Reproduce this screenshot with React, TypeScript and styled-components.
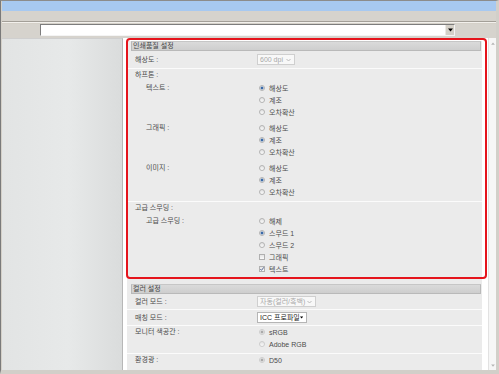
import React from "react";
import styled, { createGlobalStyle } from "styled-components";

const GlobalStyle = createGlobalStyle`
  html, body {
    margin: 0;
    padding: 0;
    background: #ffffff;
  }
  body {
    font-family: "Liberation Sans", "Noto Sans CJK KR", sans-serif;
    font-size: 7px;
    color: #4c4c4c;
  }
`;

const Window = styled.div`
  position: relative;
  width: 499px;
  height: 374px;
  box-sizing: border-box;
  border-top: 1px solid #8c8c8c;
  border-left: 1px solid #7a7a7a;
  border-right: 3px solid #d2cfc9;
  border-bottom: 4px solid #d2cfc9;
  padding-left: 1px;
  background: #d4d0c8;
  display: flex;
  flex-direction: column;
  overflow: hidden;
`;

const TitleBar = styled.div`
  height: 10px;
  background: #a7c9f1;
`;

const ToolBar = styled.div`
  height: 10px;
  background: #d6d3cd;
  border-bottom: 1px solid #a39f98;
  box-shadow: 0 1px 0 #f2f0ec;
`;

const AddressRow = styled.div`
  height: 14px;
  margin-top: 2px;
  padding-left: 38px;
  box-sizing: border-box;
  background: #d6d3cd;
`;

const AddressBox = styled.div`
  width: 415px;
  height: 12px;
  box-sizing: border-box;
  border: 1px solid;
  border-color: #7d7d7d #f4f4f4 #f4f4f4 #7d7d7d;
  background: #ffffff;
  display: flex;
  justify-content: flex-end;
`;

const AddressButton = styled.div`
  width: 8px;
  height: 100%;
  background: #d4d0c8;
  border-left: 1px solid #ece9e4;
  display: flex;
  align-items: center;
  justify-content: center;
`;

const Body = styled.div`
  flex: 1;
  display: flex;
  min-height: 0;
`;

const SidePanel = styled.div`
  width: 120px;
  border-right: 1px solid #b7b7b7;
  border-top: 1px solid #cfcfcf;
  background: linear-gradient(to right, #e2e4e4, #e7e9e9 55%, #dadcdc);
`;

const Main = styled.div`
  flex: 1;
  background: #ffffff;
  padding: 3px 6px 0 4px;
  display: flex;
`;

const Panel = styled.div`
  flex: 1;
  background: #ebebeb;
`;

const Section = styled.div<{ $gap?: number }>`
  margin-top: ${(p) => p.$gap ?? 0}px;
`;

const SectionHeader = styled.div`
  height: 10px;
  box-sizing: border-box;
  margin: 0 1px 0 4px;
  padding-left: 1px;
  line-height: 8px;
  background: linear-gradient(#dadada, #cecece);
  border: 1px solid #b9b9b9;
  border-top-color: #c6c6c6;
  color: #454545;
`;

const FieldRow = styled.div<{ $h?: number; $top?: boolean; $last?: boolean }>`
  display: grid;
  grid-template-columns: 122px 1fr;
  align-items: ${(p) => (p.$top ? "start" : "center")};
  height: ${(p) => (p.$h ? `${p.$h}px` : "auto")};
  padding: 0 0 ${(p) => (p.$top ? 3 : 0)}px 8px;
  border-bottom: ${(p) => (p.$last ? "none" : "1px solid #fbfbfb")};
`;

const Label = styled.div`
  line-height: 12px;
  white-space: nowrap;
`;

const Group = styled.div<{ $last?: boolean }>`
  padding: 0 0 3px 8px;
  border-bottom: ${(p) => (p.$last ? "none" : "1px solid #fbfbfb")};
`;

const GroupTitle = styled.div`
  height: 12px;
  line-height: 12px;
  margin-bottom: 1px;
`;

const SubRow = styled.div`
  display: grid;
  grid-template-columns: 111px 1fr;
  padding-left: 11px;
  & + & {
    margin-top: 4px;
  }
`;

const Options = styled.div`
  display: flex;
  flex-direction: column;
`;

const Option = styled.div`
  height: 12px;
  display: flex;
  align-items: center;
  gap: 4px;
  padding-left: 2px;
  white-space: nowrap;
`;

const RadioDot = styled.span<{ $checked?: boolean; $disabled?: boolean }>`
  width: 6px;
  height: 6px;
  border-radius: 50%;
  box-sizing: border-box;
  flex: none;
  border: 1px solid ${(p) => (p.$disabled ? "#cdcdcd" : "#b3b3b3")};
  background: ${(p) =>
    p.$checked
      ? `radial-gradient(circle, ${p.$disabled ? "#aaaaaa" : "#3a6aa8"} 0 1.2px, #f2f2f2 1.8px)`
      : "linear-gradient(#e2e2e2, #fbfbfb)"};
`;

const CheckBox = styled.span`
  width: 6px;
  height: 6px;
  box-sizing: border-box;
  flex: none;
  border: 1px solid #b0b0b0;
  background: linear-gradient(#e4e4e4, #fbfbfb);
  position: relative;
  svg {
    position: absolute;
    left: -1px;
    top: -1px;
  }
`;

const Select = styled.div<{ $w: number; $disabled?: boolean }>`
  width: ${(p) => p.$w}px;
  height: 11px;
  box-sizing: border-box;
  border: 1px solid ${(p) => (p.$disabled ? "#cfcfcf" : "#b5b5b5")};
  background: ${(p) => (p.$disabled ? "#f8f8f8" : "#ffffff")};
  color: ${(p) => (p.$disabled ? "#a8a8a8" : "#222222")};
  display: flex;
  align-items: center;
  justify-content: space-between;
  padding: 0 3px 0 2px;
  white-space: nowrap;
  line-height: 9px;
`;

const ScrollBar = styled.div`
  width: 7px;
  background: #f6f6f6;
  border-left: 1px solid #e2e2e2;
  display: flex;
  flex-direction: column;
  justify-content: space-between;
  align-items: center;
  padding: 4px 0 3px;
`;

const Highlight = styled.div`
  position: absolute;
  left: 125px;
  top: 37px;
  width: 361px;
  height: 241px;
  box-sizing: border-box;
  border: 2px solid #e5141c;
  border-radius: 4px;
  pointer-events: none;
`;

function Arrow({ color = "#000", up = false, size = 4 }: { color?: string; up?: boolean; size?: number }) {
  return (
    <svg width={size + 1} height={size} viewBox="0 0 5 4">
      <path d={up ? "M0 3.5 L2.5 0.5 L5 3.5 Z" : "M0 0.5 L5 0.5 L2.5 3.5 Z"} fill={color} />
    </svg>
  );
}

function Chevron() {
  return (
    <svg width="5" height="4" viewBox="0 0 5 4">
      <path d="M0.5 1 L2.5 3 L4.5 1" fill="none" stroke="#b4b4b4" strokeWidth="0.9" />
    </svg>
  );
}

type Opt = { text: string; checked?: boolean; disabled?: boolean; box?: boolean };

function OptionList({ items }: { items: Opt[] }) {
  return (
    <Options>
      {items.map((o) => (
        <Option key={o.text}>
          {o.box ? (
            <CheckBox>
              {o.checked && (
                <svg width="6" height="6" viewBox="0 0 6 6">
                  <path d="M1.3 3 L2.5 4.4 L4.8 1.3" fill="none" stroke="#4a5f8c" strokeWidth="0.9" />
                </svg>
              )}
            </CheckBox>
          ) : (
            <RadioDot $checked={o.checked} $disabled={o.disabled} />
          )}
          <span>{o.text}</span>
        </Option>
      ))}
    </Options>
  );
}

const halftone: { name: string; pick: number }[] = [
  { name: "텍스트 :", pick: 0 },
  { name: "그래픽 :", pick: 1 },
  { name: "이미지 :", pick: 1 },
];

const halftoneModes = ["해상도", "계조", "오차확산"];

export default function App() {
  return (
    <>
      <GlobalStyle />
      <Window>
        <TitleBar />
        <ToolBar />
        <AddressRow>
          <AddressBox>
            <AddressButton>
              <Arrow />
            </AddressButton>
          </AddressBox>
        </AddressRow>
        <Body>
          <SidePanel />
          <Main>
            <Panel>
              <Section>
                <SectionHeader>인쇄품질 설정</SectionHeader>
                <FieldRow $h={17}>
                  <Label>해상도 :</Label>
                  <Select $w={38} $disabled>
                    <span>600 dpi</span>
                    <Chevron />
                  </Select>
                </FieldRow>
                <Group>
                  <GroupTitle>하프톤 :</GroupTitle>
                  {halftone.map((h) => (
                    <SubRow key={h.name}>
                      <Label>{h.name}</Label>
                      <OptionList
                        items={halftoneModes.map((m, i) => ({ text: m, checked: i === h.pick }))}
                      />
                    </SubRow>
                  ))}
                </Group>
                <Group $last>
                  <GroupTitle>고급 스무딩 :</GroupTitle>
                  <SubRow>
                    <Label>고급 스무딩 :</Label>
                    <OptionList
                      items={[
                        { text: "해제" },
                        { text: "스무드 1", checked: true },
                        { text: "스무드 2" },
                        { text: "그래픽", box: true },
                        { text: "텍스트", box: true, checked: true },
                      ]}
                    />
                  </SubRow>
                </Group>
              </Section>
              <Section $gap={6}>
                <SectionHeader>컬러 설정</SectionHeader>
                <FieldRow $h={15}>
                  <Label>컬러 모드 :</Label>
                  <Select $w={59} $disabled>
                    <span>자동(컬러/흑백)</span>
                    <Chevron />
                  </Select>
                </FieldRow>
                <FieldRow $h={15}>
                  <Label>매칭 모드 :</Label>
                  <Select $w={50}>
                    <span>ICC 프로파일</span>
                    <Arrow size={3} />
                  </Select>
                </FieldRow>
                <FieldRow $top>
                  <Label>모니터 색공간 :</Label>
                  <OptionList
                    items={[
                      { text: "sRGB", checked: true, disabled: true },
                      { text: "Adobe RGB", disabled: true },
                    ]}
                  />
                </FieldRow>
                <FieldRow $top $last>
                  <Label>환경광 :</Label>
                  <OptionList items={[{ text: "D50", checked: true, disabled: true }]} />
                </FieldRow>
              </Section>
            </Panel>
          </Main>
          <ScrollBar>
            <Arrow up color="#b4b4b4" size={3} />
            <Arrow color="#b4b4b4" size={3} />
          </ScrollBar>
        </Body>
        <Highlight />
      </Window>
    </>
  );
}
